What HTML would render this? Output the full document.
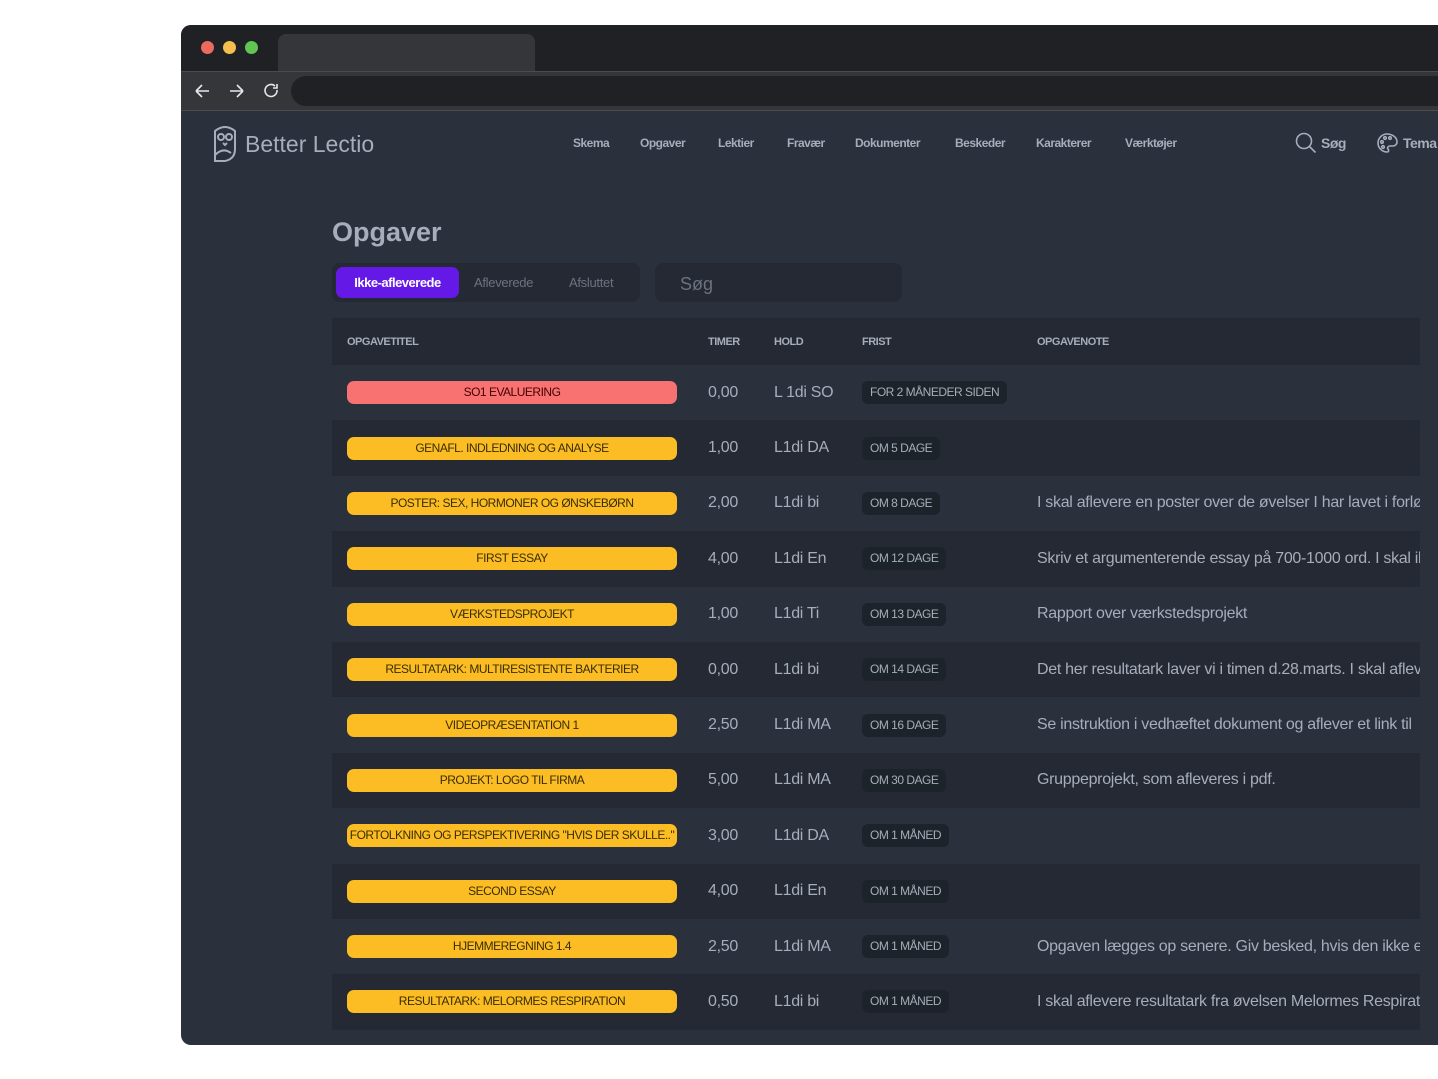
<!DOCTYPE html>
<html><head><meta charset="utf-8"><style>
*{box-sizing:border-box;margin:0;padding:0}
body{width:1438px;height:1079px;background:#fff;position:relative;overflow:hidden;font-family:"Liberation Sans",sans-serif}
.win{position:absolute;left:181px;top:25px;width:1300px;height:1020px;border-radius:10px;overflow:hidden;background:#2a303c}
.top{position:absolute;left:0;top:0;right:0;height:46px;background:#202124}
.dot{position:absolute;top:16px;width:13px;height:13px;border-radius:50%}
.tab{position:absolute;left:97px;top:9px;width:257px;height:37px;background:#35363a;border-radius:8px 8px 0 0}
.bar{position:absolute;left:0;top:46px;right:0;height:40px;background:#35363a;border-top:1px solid #4a4b4f;border-bottom:1px solid #4a4b4f}
.url{position:absolute;left:110px;top:4px;right:0;height:30px;background:#202124;border-radius:15px}
.nav{position:absolute;top:111px;font-size:12px;font-weight:bold;color:#a6adbb;letter-spacing:-0.5px}
.abs{position:absolute}
table{position:absolute;left:151px;top:293px;width:1088px;border-collapse:collapse;table-layout:fixed}
td,th{height:55.4px;vertical-align:middle;white-space:nowrap;overflow:hidden;text-align:left}
th{height:47px;font-size:11px;font-weight:bold;color:#a6adbb;letter-spacing:-0.5px;background:#242933}
tr:nth-child(odd) td{background:#242933}
td{font-size:16px;color:#a6adbb;letter-spacing:-0.3px}
.pill{width:330px;height:23px;border-radius:7px;background:#fbbd23;color:#3a2d05;font-size:12px;letter-spacing:-0.5px;text-align:center;line-height:23px;overflow:hidden}
.red{background:#f87272;color:#470000}
.f{display:inline-block;vertical-align:middle;background:#1d232a;color:#a6adbb;font-size:12px;font-weight:normal;padding:0 8px;height:23px;line-height:22px;border-radius:6px;letter-spacing:-0.5px}
</style></head><body>
<div class="win">
<div class="top"><div class="dot" style="left:20px;background:#ed6a5e"></div><div class="dot" style="left:42px;background:#f5bf4f"></div><div class="dot" style="left:64px;background:#61c554"></div><div class="tab"></div></div>
<div class="bar">
<svg class="abs" style="left:12px;top:9px" width="100" height="20" fill="none" stroke="#e8e8e8" stroke-width="1.6"><path d="M3 10h13M3 10l6-6M3 10l6 6"/><path d="M37 10h13M50 10l-6-6M50 10l-6 6"/><path d="M82 5a6 6 0 1 0 2 4"/><path d="M84 3v4h-4"/></svg>
<div class="url"></div></div>
<svg class="abs" style="left:30px;top:98px" width="28" height="40" fill="none" stroke="#a6adbb" stroke-width="2"><path d="M4 8q10-8 20 0v18q0 10-10 12h-10z"/><circle cx="10" cy="14" r="3"/><circle cx="18" cy="14" r="3"/><path d="M12 20l2 2 2-2"/><path d="M4 32q8-8 16-2"/></svg>
<div class="abs" style="left:64px;top:106px;font-size:23px;color:#a6adbb">Better Lectio</div>
<div class="nav" style="left:392px">Skema</div><div class="nav" style="left:459px">Opgaver</div><div class="nav" style="left:537px">Lektier</div><div class="nav" style="left:606px">Fravær</div><div class="nav" style="left:674px">Dokumenter</div><div class="nav" style="left:774px">Beskeder</div><div class="nav" style="left:855px">Karakterer</div><div class="nav" style="left:944px">Værktøjer</div>
<svg class="abs" style="left:1114px;top:107px" width="24" height="24" fill="none" stroke="#a6adbb" stroke-width="1.6"><circle cx="9" cy="9" r="7.5"/><path d="M14.5 14.5l6 6"/></svg>
<div class="nav" style="left:1140px;font-size:14px;top:110px">Søg</div>
<svg class="abs" style="left:1195px;top:107px" width="24" height="24" fill="none" stroke="#a6adbb" stroke-width="1.6"><path d="M11 2a9 9 0 1 0 0 18c2 0 2-2 1-3s0-3 2-3h3a4 4 0 0 0 4-4c0-5-5-8-10-8z"/><circle cx="6" cy="10" r="1.3"/><circle cx="9" cy="6" r="1.3"/><circle cx="14" cy="6" r="1.3"/><circle cx="7" cy="15" r="1.3"/></svg>
<div class="nav" style="left:1222px;font-size:14px;top:110px">Tema</div>
<div class="abs" style="left:151px;top:192px;font-size:27px;font-weight:bold;color:#a6adbb">Opgaver</div>
<div class="abs" style="left:151px;top:238px;width:308px;height:39px;background:#242933;border-radius:8px"></div>
<div class="abs" style="left:155px;top:242px;width:123px;height:31px;background:#6419e6;border-radius:7px;color:#fff;font-size:13px;font-weight:bold;text-align:center;line-height:31px;letter-spacing:-0.5px">Ikke-afleverede</div>
<div class="abs" style="left:293px;top:250px;font-size:13px;color:#6b7280;letter-spacing:-0.3px">Afleverede</div>
<div class="abs" style="left:388px;top:250px;font-size:13px;color:#6b7280;letter-spacing:-0.3px">Afsluttet</div>
<div class="abs" style="left:474px;top:238px;width:247px;height:39px;background:#242933;border-radius:8px;color:#6b7280;font-size:18px;padding:11px 0 0 25px">Søg</div>
<table>
<colgroup><col style="width:376px"><col style="width:66px"><col style="width:88px"><col style="width:175px"><col></colgroup>
<tr><th style="padding-left:15px">OPGAVETITEL</th><th>TIMER</th><th>HOLD</th><th>FRIST</th><th>OPGAVENOTE</th></tr>
<tr><td style="padding-left:15px"><div class="pill red">SO1 EVALUERING</div></td><td>0,00</td><td>L 1di SO</td><td><span class="f">FOR 2 MÅNEDER SIDEN</span></td><td></td></tr>
<tr><td style="padding-left:15px"><div class="pill">GENAFL. INDLEDNING OG ANALYSE</div></td><td>1,00</td><td>L1di DA</td><td><span class="f">OM 5 DAGE</span></td><td></td></tr>
<tr><td style="padding-left:15px"><div class="pill">POSTER: SEX, HORMONER OG ØNSKEBØRN</div></td><td>2,00</td><td>L1di bi</td><td><span class="f">OM 8 DAGE</span></td><td>I skal aflevere en poster over de øvelser I har lavet i forløbet</td></tr>
<tr><td style="padding-left:15px"><div class="pill">FIRST ESSAY</div></td><td>4,00</td><td>L1di En</td><td><span class="f">OM 12 DAGE</span></td><td>Skriv et argumenterende essay på 700-1000 ord. I skal ikke</td></tr>
<tr><td style="padding-left:15px"><div class="pill">VÆRKSTEDSPROJEKT</div></td><td>1,00</td><td>L1di Ti</td><td><span class="f">OM 13 DAGE</span></td><td>Rapport over værkstedsprojekt</td></tr>
<tr><td style="padding-left:15px"><div class="pill">RESULTATARK: MULTIRESISTENTE BAKTERIER</div></td><td>0,00</td><td>L1di bi</td><td><span class="f">OM 14 DAGE</span></td><td>Det her resultatark laver vi i timen d.28.marts. I skal aflevere</td></tr>
<tr><td style="padding-left:15px"><div class="pill">VIDEOPRÆSENTATION 1</div></td><td>2,50</td><td>L1di MA</td><td><span class="f">OM 16 DAGE</span></td><td>Se instruktion i vedhæftet dokument og aflever et link til</td></tr>
<tr><td style="padding-left:15px"><div class="pill">PROJEKT: LOGO TIL FIRMA</div></td><td>5,00</td><td>L1di MA</td><td><span class="f">OM 30 DAGE</span></td><td>Gruppeprojekt, som afleveres i pdf.</td></tr>
<tr><td style="padding-left:15px"><div class="pill">FORTOLKNING OG PERSPEKTIVERING "HVIS DER SKULLE.."</div></td><td>3,00</td><td>L1di DA</td><td><span class="f">OM 1 MÅNED</span></td><td></td></tr>
<tr><td style="padding-left:15px"><div class="pill">SECOND ESSAY</div></td><td>4,00</td><td>L1di En</td><td><span class="f">OM 1 MÅNED</span></td><td></td></tr>
<tr><td style="padding-left:15px"><div class="pill">HJEMMEREGNING 1.4</div></td><td>2,50</td><td>L1di MA</td><td><span class="f">OM 1 MÅNED</span></td><td>Opgaven lægges op senere. Giv besked, hvis den ikke er</td></tr>
<tr><td style="padding-left:15px"><div class="pill">RESULTATARK: MELORMES RESPIRATION</div></td><td>0,50</td><td>L1di bi</td><td><span class="f">OM 1 MÅNED</span></td><td>I skal aflevere resultatark fra øvelsen Melormes Respiration</td></tr>
</table>
</div>
</body></html>
